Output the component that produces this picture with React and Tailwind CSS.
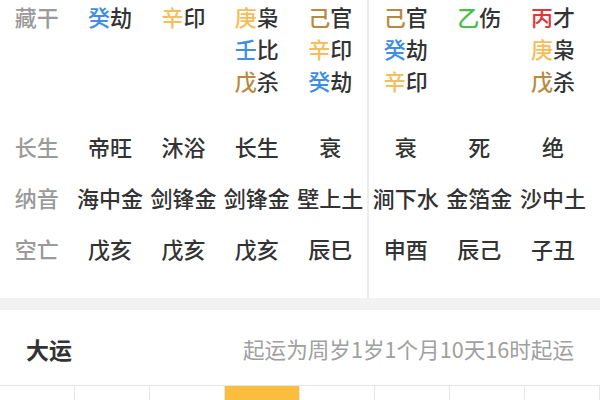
import React from "react";

// colour of each heavenly stem
const STEM = {
  甲: "text-[#4cbd48]",
  乙: "text-[#4cbd48]",
  丙: "text-[#e0373a]",
  丁: "text-[#e0373a]",
  戊: "text-[#b8893f]",
  己: "text-[#b8893f]",
  庚: "text-[#f5bd5c]",
  辛: "text-[#f5bd5c]",
  壬: "text-[#3d8ee4]",
  癸: "text-[#3d8ee4]",
};

// 藏干 per pillar (label first)
const CANG = [
  ["藏干"],
  ["癸劫"],
  ["辛印"],
  ["庚枭", "壬比", "戊杀"],
  ["己官", "辛印", "癸劫"],
  ["己官", "癸劫", "辛印"],
  ["乙伤"],
  ["丙才", "庚枭", "戊杀"],
];

const ROWS = [
  ["长生", "帝旺", "沐浴", "长生", "衰", "衰", "死", "绝"],
  ["纳音", "海中金", "剑锋金", "剑锋金", "壁上土", "涧下水", "金箔金", "沙中土"],
  ["空亡", "戊亥", "戊亥", "戊亥", "辰巳", "申酉", "辰己", "子丑"],
];

function Stem({ text }) {
  return (
    <div>
      <span className={STEM[text[0]]}>{text[0]}</span>
      {text.slice(1)}
    </div>
  );
}

function Block({ from, to, cellW }) {
  return (
    <div className="flex flex-col">
      <div className="flex h-[121px] leading-[32px]">
        {CANG.slice(from, to).map((lines, i) =>
          from + i === 0 ? (
            <div key={i} className={`${cellW} text-center text-[#9a9a9a]`}>
              {lines[0]}
            </div>
          ) : (
            <div key={i} className={`${cellW} text-center text-[#333]`}>
              {lines.map((l, j) => (
                <Stem key={j} text={l} />
              ))}
            </div>
          )
        )}
      </div>
      {ROWS.map((row, r) => (
        <div key={r} className="flex h-[51px] items-center">
          {row.slice(from, to).map((cell, i) => (
            <div
              key={i}
              className={`${cellW} text-center whitespace-nowrap ${
                from + i === 0 ? "text-[#9a9a9a]" : "text-[#333]"
              }`}
            >
              {cell}
            </div>
          ))}
        </div>
      ))}
      <div className="h-[24px]" />
    </div>
  );
}

export default function App() {
  return (
    <div
      className="w-[600px] min-h-[460px] bg-white overflow-hidden"
      style={{ fontFamily: '"Noto Sans CJK SC", "Noto Sans", sans-serif' }}
    >
      {/* pillar table */}
      <div className="flex text-[22px] font-medium">
        <Block from={0} to={5} cellW="w-[73.4px]" />
        <div className="w-[2px] bg-[#ececec]" />
        <Block from={5} to={8} cellW="w-[73.6px]" />
      </div>

      <div className="h-[12px] bg-[#f2f2f2]" />

      {/* 大运 header */}
      <div className="flex h-[75px] items-center justify-between px-[26px] pt-[4px]">
        <span className="text-[23px] font-bold text-[#333]">大运</span>
        <span className="text-[21.6px] text-[#a0a0a0]">起运为周岁1岁1个月10天16时起运</span>
      </div>

      <div className="grid grid-cols-8 border-t border-[#e6e6e6]">
        {[0, 1, 2, 3, 4, 5, 6, 7].map((i) => (
          <div
            key={i}
            className={`h-[60px] border-r border-[#e6e6e6] ${i === 3 ? "bg-[#fbbd3e]" : ""}`}
          />
        ))}
      </div>
    </div>
  );
}
